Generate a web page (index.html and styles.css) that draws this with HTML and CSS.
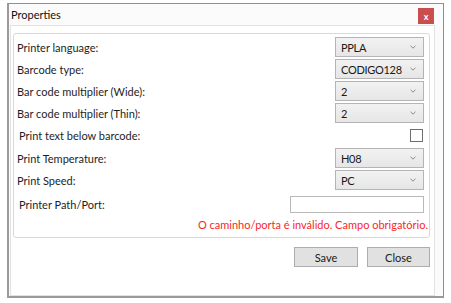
FILE: index.html
```html
<!DOCTYPE html>
<html>
<head>
<meta charset="utf-8">
<link rel="stylesheet" href="styles.css">
</head>
<body>
<div class="window">
  <div class="titlebar">
    <span class="title">Properties</span>
    <span class="close">x</span>
  </div>
  <div class="content">
    <div class="group">
      <div class="row">
        <span class="label">Printer language:</span>
        <div class="combo"><span>PPLA</span><svg class="arrow" width="6" height="4" viewBox="0 0 6 4"><polyline points="0.5,0.8 3,3.2 5.5,0.8" fill="none" stroke="#8a8a8a" stroke-width="1"/></svg></div>
      </div>
      <div class="row">
        <span class="label">Barcode type:</span>
        <div class="combo"><span>CODIGO128</span><svg class="arrow" width="6" height="4" viewBox="0 0 6 4"><polyline points="0.5,0.8 3,3.2 5.5,0.8" fill="none" stroke="#8a8a8a" stroke-width="1"/></svg></div>
      </div>
      <div class="row">
        <span class="label">Bar code multiplier (Wide):</span>
        <div class="combo"><span>2</span><svg class="arrow" width="6" height="4" viewBox="0 0 6 4"><polyline points="0.5,0.8 3,3.2 5.5,0.8" fill="none" stroke="#8a8a8a" stroke-width="1"/></svg></div>
      </div>
      <div class="row">
        <span class="label">Bar code multiplier (Thin):</span>
        <div class="combo"><span>2</span><svg class="arrow" width="6" height="4" viewBox="0 0 6 4"><polyline points="0.5,0.8 3,3.2 5.5,0.8" fill="none" stroke="#8a8a8a" stroke-width="1"/></svg></div>
      </div>
      <div class="row row-check">
        <span class="label indent">Print text below barcode:</span>
        <span class="checkbox"></span>
      </div>
      <div class="row">
        <span class="label">Print Temperature:</span>
        <div class="combo"><span>H08</span><svg class="arrow" width="6" height="4" viewBox="0 0 6 4"><polyline points="0.5,0.8 3,3.2 5.5,0.8" fill="none" stroke="#8a8a8a" stroke-width="1"/></svg></div>
      </div>
      <div class="row">
        <span class="label">Print Speed:</span>
        <div class="combo"><span>PC</span><svg class="arrow" width="6" height="4" viewBox="0 0 6 4"><polyline points="0.5,0.8 3,3.2 5.5,0.8" fill="none" stroke="#8a8a8a" stroke-width="1"/></svg></div>
      </div>
      <div class="row row-path">
        <span class="label indent">Printer Path/Port:</span>
        <span class="textbox"></span>
      </div>
      <div class="error">O caminho/porta é inválido. Campo obrigatório.</div>
    </div>
    <div class="buttons">
      <span class="btn btn-save">Save</span>
      <span class="btn btn-close">Close</span>
    </div>
  </div>
</div>
</body>
</html>
```

FILE: styles.css
```css
html, body {
  margin: 0;
  padding: 0;
  background: #ffffff;
}
body {
  font-family: Lato, "Noto Sans", sans-serif;
  font-size: 11px;
  color: #1e1e1e;
}
.window {
  box-sizing: border-box;
  margin: 3px 0 0 7px;
  width: 437px;
  height: 295px;
  border: 1px solid #8f8f8f;
  border-left: 2px solid #9a9a9a;
  border-bottom: 2px solid #9a9a9a;
  background: #fbfbfb;
  display: flex;
  flex-direction: column;
}
.titlebar {
  height: 21px;
  display: flex;
  align-items: center;
  justify-content: space-between;
  padding: 0 9px 0 2px;
}
.title {
  font-size: 11px;
  color: #111;
  margin-top: -1px;
}
.close {
  width: 16px;
  height: 16px;
  background: #c94f4f;
  color: #fff;
  font-size: 9px;
  font-weight: bold;
  display: flex;
  align-items: center;
  justify-content: center;
  line-height: 1;
  margin-top: 3px;
}
.content {
  flex: 1;
  margin: 0 8px 0 1px;
  border: 1px solid #e2e2e2;
  background: #ffffff;
  display: flex;
  flex-direction: column;
}
.group {
  margin: 7px 4px 0 2px;
  border: 1px solid #d9d9d9;
  border-radius: 3px;
  padding: 3px 5px 5px 3px;
  display: flex;
  flex-direction: column;
  gap: 2px;
}
.row {
  height: 20px;
  display: flex;
  align-items: center;
  justify-content: space-between;
}
.row-check {
  height: 21px;
}
.row-path {
  height: 17px;
  margin-top: 4px;
}
.label {
  white-space: nowrap;
}
.indent {
  padding-left: 2px;
}
.combo {
  box-sizing: border-box;
  width: 89px;
  height: 20px;
  border: 1px solid #b4b4b4;
  background: linear-gradient(#f2f2f2, #e6e6e6);
  display: flex;
  align-items: center;
  justify-content: space-between;
  padding: 0 7px 0 5px;
  color: #1a1a1a;
  letter-spacing: -0.3px;
}
.checkbox {
  box-sizing: border-box;
  width: 13px;
  height: 13px;
  border: 1px solid #6e6e6e;
  background: #fff;
  margin-right: 1px;
}
.textbox {
  box-sizing: border-box;
  width: 134px;
  height: 17px;
  border: 1px solid #b9b9b9;
  background: #fff;
}
.error {
  margin-top: 2px;
  margin-right: -4px;
  text-align: right;
  color: #f72828;
  height: 15px;
  line-height: 15px;
}
.buttons {
  display: flex;
  justify-content: flex-end;
  gap: 9px;
  margin: 9px 4px 0 0;
}
.btn {
  box-sizing: border-box;
  height: 20px;
  width: 64px;
  border: 1px solid #adadad;
  background: #e1e1e1;
  display: flex;
  align-items: center;
  justify-content: center;
  color: #1a1a1a;
}
.btn-close {
  width: 63px;
}
```
